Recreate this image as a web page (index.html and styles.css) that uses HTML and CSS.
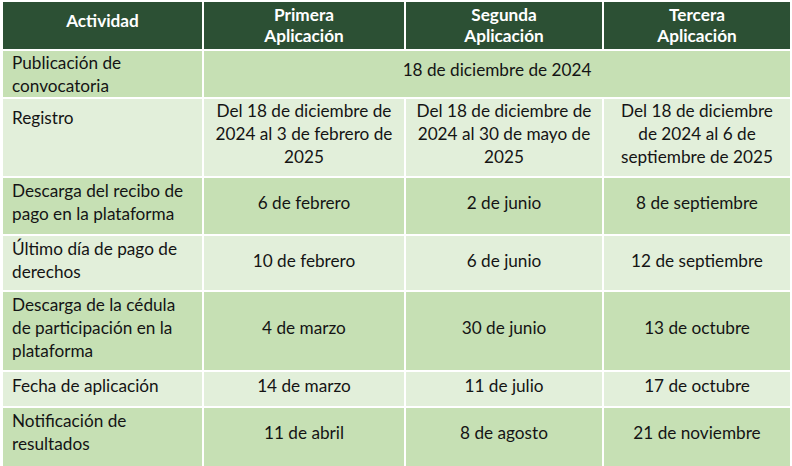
FILE: index.html
```html
<!DOCTYPE html>
<html lang="es">
<head>
<meta charset="utf-8">
<title>Calendario</title>
<link rel="stylesheet" href="styles.css">
</head>
<body>
<table class="cal">
  <colgroup>
    <col class="c1"><col class="c2"><col class="c3"><col class="c4">
  </colgroup>
  <thead>
    <tr class="head">
      <th class="act">Actividad</th>
      <th>Primera<br>Aplicación</th>
      <th>Segunda<br>Aplicación</th>
      <th>Tercera<br>Aplicación</th>
    </tr>
  </thead>
  <tbody>
    <tr class="dark r1">
      <td class="name">Publicación de<br>convocatoria</td>
      <td class="val span" colspan="3">18 de diciembre de 2024</td>
    </tr>
    <tr class="light r2">
      <td class="name">Registro</td>
      <td class="val top">Del 18 de diciembre de<br>2024 al 3 de febrero de<br>2025</td>
      <td class="val top">Del 18 de diciembre de<br>2024 al 30 de mayo de<br>2025</td>
      <td class="val top">Del 18 de diciembre<br>de 2024 al 6 de<br>septiembre de 2025</td>
    </tr>
    <tr class="dark r3">
      <td class="name">Descarga del recibo de<br>pago en la plataforma</td>
      <td class="val">6 de febrero</td>
      <td class="val">2 de junio</td>
      <td class="val">8 de septiembre</td>
    </tr>
    <tr class="light r4">
      <td class="name">Último día de pago de<br>derechos</td>
      <td class="val">10 de febrero</td>
      <td class="val">6 de junio</td>
      <td class="val">12 de septiembre</td>
    </tr>
    <tr class="dark r5">
      <td class="name">Descarga de la cédula<br>de participación en la<br>plataforma</td>
      <td class="val">4 de marzo</td>
      <td class="val">30 de junio</td>
      <td class="val">13 de octubre</td>
    </tr>
    <tr class="light r6">
      <td class="name">Fecha de aplicación</td>
      <td class="val">14 de marzo</td>
      <td class="val">11 de julio</td>
      <td class="val">17 de octubre</td>
    </tr>
    <tr class="dark r7">
      <td class="name">Notificación de<br>resultados</td>
      <td class="val">11 de abril</td>
      <td class="val">8 de agosto</td>
      <td class="val">21 de noviembre</td>
    </tr>
  </tbody>
</table>
</body>
</html>
```
FILE: styles.css
```css
html, body {
  margin: 0;
  padding: 0;
  background: #ffffff;
}

body {
  font-family: Lato, "Open Sans", sans-serif;
  font-size: 17.2px;
  color: #141414;
  overflow: hidden;
}

.cal {
  margin-left: 1px;
  border-collapse: separate;
  border-spacing: 2px;
  table-layout: fixed;
  width: 791px;
}

.c1 { width: 199px; }
.c2 { width: 200px; }
.c3 { width: 196px; }
.c4 { width: 186px; }

.cal th,
.cal td {
  padding: 0;
  line-height: 23px;
  box-sizing: border-box;
  white-space: nowrap;
}

.head th {
  background: #2c5034;
  color: #ffffff;
  font-weight: bold;
  height: 47px;
  vertical-align: top;
  padding-top: 2px;
  text-align: center;
  line-height: 21px;
}

.head th.act {
  padding-top: 8px;
}

.dark td { background: #c6e0b4; }
.light td { background: #e2efda; }

.cal td.name {
  text-align: left;
  vertical-align: top;
  padding-left: 9px;
  padding-top: 1px;
}

.cal td.val {
  text-align: center;
  vertical-align: middle;
  padding-bottom: 8px;
}

.cal td.val.top {
  vertical-align: top;
  padding-top: 0;
  padding-bottom: 0;
}

.r1 td { height: 46px; }
.r2 td { height: 77px; }
.r3 td { height: 56px; }
.r4 td { height: 54px; }
.r5 td { height: 78px; }
.r6 td { height: 34px; }
.r7 td { height: 60px; }

.cal .r1 td.name { padding-top: 0; }
.cal .r2 td.name { padding-top: 7px; }
.cal .r6 td.name { padding-top: 2px; }

.cal .r1 td.val { padding-bottom: 10px; }
.cal .r4 td.val { padding-bottom: 6px; }
.cal .r7 td.val { padding-bottom: 12px; }
```
